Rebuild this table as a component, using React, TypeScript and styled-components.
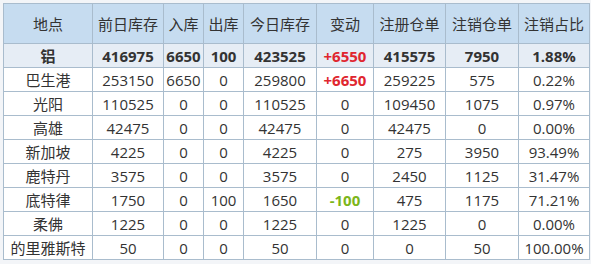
import React from "react";
import styled, { createGlobalStyle } from "styled-components";

const Global = createGlobalStyle`
  html, body { margin: 0; padding: 0; background: #f3f5f8; }
  body { font-family: "Open Sans", "Noto Sans CJK SC", sans-serif; }
`;

const Wrap = styled.div`
  padding: 3px;
  width: 591px;
  box-sizing: border-box;
`;

const Table = styled.table`
  border-collapse: collapse;
  table-layout: fixed;
  width: 586px;
  background: #fff;
  color: #333;
  font-size: 15px;
`;

const Th = styled.th`
  background: #c6dcf0;
  height: 39px;
  padding: 0;
  border: 1px solid #a9bccd;
  font-weight: normal;
  text-align: center;
  white-space: nowrap;
`;

const Row = styled.tr<{ $bold?: boolean }>`
  background: ${(p) => (p.$bold ? "#e6edf5" : "#fff")};
  font-weight: ${(p) => (p.$bold ? 700 : 400)};
`;

const Td = styled.td<{ $tone?: "up" | "down" }>`
  height: 23px;
  padding: 0;
  border: 1px solid #a9bccd;
  text-align: center;
  white-space: nowrap;
  color: ${(p) => (p.$tone === "up" ? "#e0262f" : p.$tone === "down" ? "#7cb61a" : "#333")};
  font-weight: ${(p) => (p.$tone ? 700 : "inherit")};
`;

const widths = [89, 71, 40, 40, 73, 57, 72, 73, 71];
const headers = ["地点", "前日库存", "入库", "出库", "今日库存", "变动", "注册仓单", "注销仓单", "注销占比"];

const rows: string[][] = [
  ["铝", "416975", "6650", "100", "423525", "+6550", "415575", "7950", "1.88%"],
  ["巴生港", "253150", "6650", "0", "259800", "+6650", "259225", "575", "0.22%"],
  ["光阳", "110525", "0", "0", "110525", "0", "109450", "1075", "0.97%"],
  ["高雄", "42475", "0", "0", "42475", "0", "42475", "0", "0.00%"],
  ["新加坡", "4225", "0", "0", "4225", "0", "275", "3950", "93.49%"],
  ["鹿特丹", "3575", "0", "0", "3575", "0", "2450", "1125", "31.47%"],
  ["底特律", "1750", "0", "100", "1650", "-100", "475", "1175", "71.21%"],
  ["柔佛", "1225", "0", "0", "1225", "0", "1225", "0", "0.00%"],
  ["的里雅斯特", "50", "0", "0", "50", "0", "0", "50", "100.00%"],
];

const tone = (v: string) => (v.startsWith("+") ? "up" : v.startsWith("-") ? "down" : undefined);

export default function App() {
  return (
    <>
      <Global />
      <Wrap>
        <Table>
          <colgroup>
            {widths.map((w, i) => (
              <col key={i} style={{ width: w }} />
            ))}
          </colgroup>
          <thead>
            <tr>
              {headers.map((h) => (
                <Th key={h}>{h}</Th>
              ))}
            </tr>
          </thead>
          <tbody>
            {rows.map((r, i) => (
              <Row key={i} $bold={i === 0}>
                {r.map((c, j) => (
                  <Td key={j} $tone={j === 5 ? tone(c) : undefined}>
                    {c}
                  </Td>
                ))}
              </Row>
            ))}
          </tbody>
        </Table>
      </Wrap>
    </>
  );
}
